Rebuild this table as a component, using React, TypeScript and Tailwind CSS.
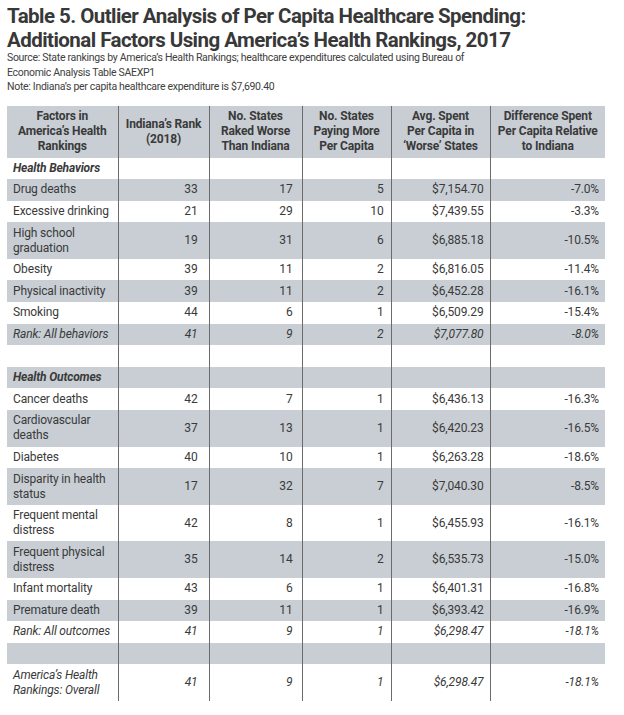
type Row = {
  label?: string[]
  values?: string[]
  kind?: "section" | "rank" | "blank"
}

const rows: Row[] = [
  { label: ["Health Behaviors"], kind: "section" },
  { label: ["Drug deaths"], values: ["33", "17", "5", "$7,154.70", "-7.0%"] },
  { label: ["Excessive drinking"], values: ["21", "29", "10", "$7,439.55", "-3.3%"] },
  { label: ["High school", "graduation"], values: ["19", "31", "6", "$6,885.18", "-10.5%"] },
  { label: ["Obesity"], values: ["39", "11", "2", "$6,816.05", "-11.4%"] },
  { label: ["Physical inactivity"], values: ["39", "11", "2", "$6,452.28", "-16.1%"] },
  { label: ["Smoking"], values: ["44", "6", "1", "$6,509.29", "-15.4%"] },
  { label: ["Rank: All behaviors"], values: ["41", "9", "2", "$7,077.80", "-8.0%"], kind: "rank" },
  { kind: "blank" },
  { label: ["Health Outcomes"], kind: "section" },
  { label: ["Cancer deaths"], values: ["42", "7", "1", "$6,436.13", "-16.3%"] },
  { label: ["Cardiovascular", "deaths"], values: ["37", "13", "1", "$6,420.23", "-16.5%"] },
  { label: ["Diabetes"], values: ["40", "10", "1", "$6,263.28", "-18.6%"] },
  { label: ["Disparity in health", "status"], values: ["17", "32", "7", "$7,040.30", "-8.5%"] },
  { label: ["Frequent mental", "distress"], values: ["42", "8", "1", "$6,455.93", "-16.1%"] },
  { label: ["Frequent physical", "distress"], values: ["35", "14", "2", "$6,535.73", "-15.0%"] },
  { label: ["Infant mortality"], values: ["43", "6", "1", "$6,401.31", "-16.8%"] },
  { label: ["Premature death"], values: ["39", "11", "1", "$6,393.42", "-16.9%"] },
  { label: ["Rank: All outcomes"], values: ["41", "9", "1", "$6,298.47", "-18.1%"], kind: "rank" },
  { kind: "blank" },
  { label: ["America\u2019s Health", "Rankings: Overall"], values: ["41", "9", "1", "$6,298.47", "-18.1%"], kind: "rank" },
]

const headers = [
  ["Factors in", "America\u2019s Health", "Rankings"],
  ["Indiana\u2019s Rank", "(2018)"],
  ["No. States", "Raked Worse", "Than Indiana"],
  ["No. States", "Paying More", "Per Capita"],
  ["Avg. Spent", "Per Capita in", "\u2018Worse\u2019 States"],
  ["Difference Spent", "Per Capita Relative", "to Indiana"],
]

// right padding per numeric column, measured off the print
const numPad = ["pr-[11px]", "pr-[9px]", "pr-[7px]", "pr-[6px]", "pr-[6px]"]

function Lines({ lines }: { lines: string[] }) {
  return (
    <>
      {lines.map((l, i) => (
        <span key={i}>
          {i > 0 && <br />}
          {l}
        </span>
      ))}
    </>
  )
}

export default function App() {
  return (
    <div className="w-[624px] h-[715px] bg-white px-[7px] pt-[4px] text-[#3a3a3a] font-['Roboto',sans-serif]">
      <h1 className="text-[20.5px] leading-[24px] font-bold tracking-[-0.55px] text-[#383838]">
        Table 5. Outlier Analysis of Per Capita Healthcare Spending:
        <br />
        Additional Factors Using America’s Health Rankings, 2017
      </h1>
      <div className="-mt-[1px] text-[10.5px] leading-[14.5px] tracking-[-0.3px] text-[#404040]">
        <p>Source: State rankings by America’s Health Rankings; healthcare expenditures calculated using Bureau of</p>
        <p>Economic Analysis Table SAEXP1</p>
        <p>Note: Indiana’s per capita healthcare expenditure is $7,690.40</p>
      </div>

      <table className="mt-[11px] w-[598px] table-fixed border-collapse text-[12px] leading-[15px] tracking-[-0.15px]">
        <colgroup>
          <col className="w-[111px]" />
          <col className="w-[91px]" />
          <col className="w-[93px]" />
          <col className="w-[89px]" />
          <col className="w-[99px]" />
          <col className="w-[115px]" />
        </colgroup>
        <thead>
          <tr className="bg-[#c8ced4]">
            {headers.map((h, i) => (
              <th
                key={i}
                className={`h-[52px] px-[2px] py-[3px] text-center align-middle font-bold whitespace-nowrap ${
                  i > 0 ? "border-l border-[#6b6b6b]" : ""
                }`}
              >
                <Lines lines={h} />
              </th>
            ))}
          </tr>
        </thead>
        <tbody>
          {rows.map((r, ri) => {
            const stripe = ri % 2 === 1 ? "bg-[#c8ced4]" : "bg-white"
            const italic = r.kind === "rank" || r.kind === "section"
            return (
              <tr key={ri} className={stripe}>
                <td
                  className={`pl-[6px] py-[3.3px] whitespace-nowrap align-middle ${italic ? "italic" : ""} ${
                    r.kind === "section" ? "font-bold" : ""
                  }`}
                >
                  {r.label ? <Lines lines={r.label} /> : "\u00a0"}
                </td>
                {numPad.map((pad, ci) => (
                  <td
                    key={ci}
                    className={`border-l border-[#6b6b6b] ${pad} py-[3.3px] text-right align-middle whitespace-nowrap ${
                      r.kind === "rank" ? "italic" : ""
                    }`}
                  >
                    {r.values ? r.values[ci] : ""}
                  </td>
                ))}
              </tr>
            )
          })}
        </tbody>
      </table>
    </div>
  )
}
